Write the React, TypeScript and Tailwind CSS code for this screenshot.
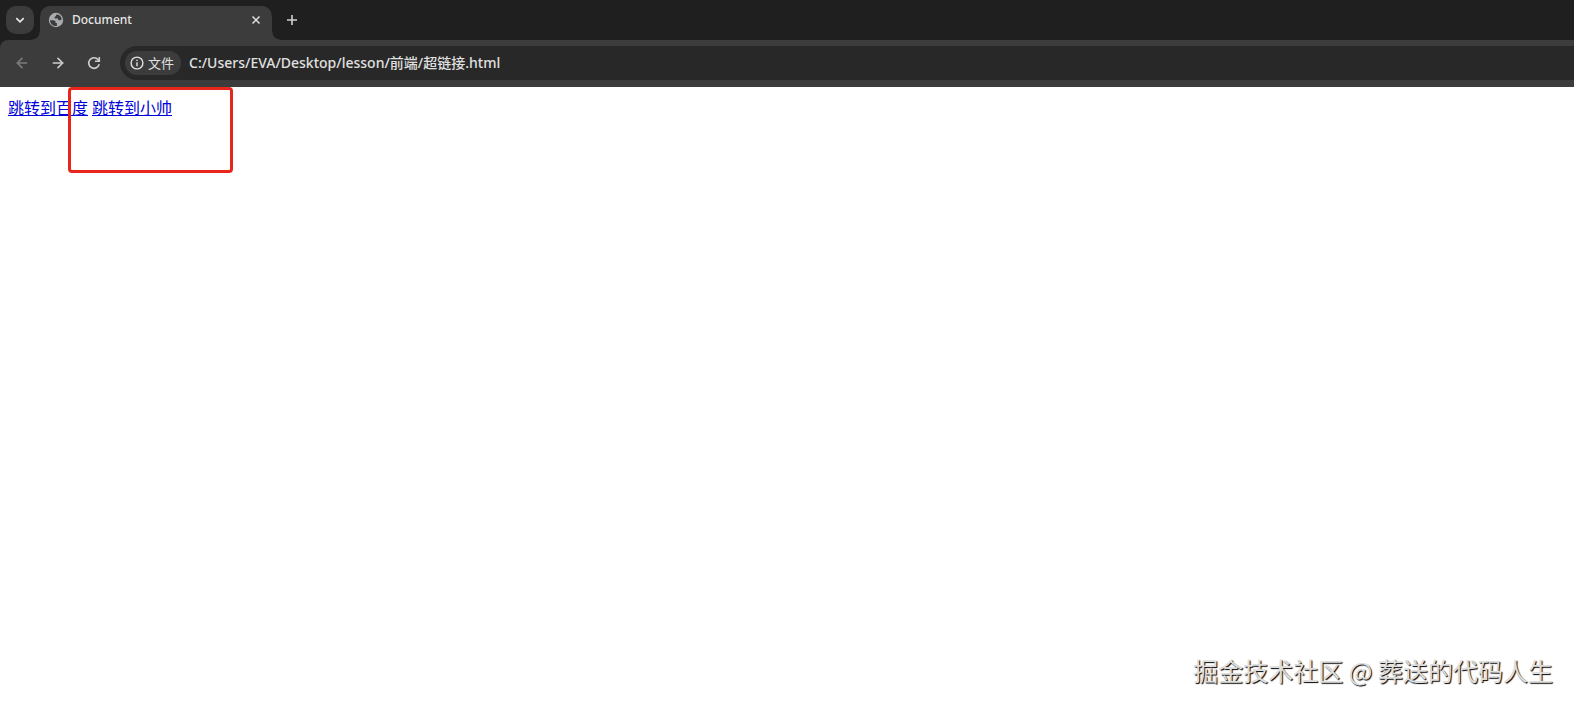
import { ArrowLeft, ArrowRight } from "lucide-react";

function GlobeIcon() {
  return (
    <svg viewBox="0 0 16 16" className="size-4 shrink-0" aria-hidden="true">
      <circle cx="8" cy="8" r="7.200" fill="#a9acaf" />
      <path
        d="M2 8.300h3.200c1.600 0 2.400.8 2.400 2.200v.6h1.300v2.900C5 14.500 2.200 12 2 8.300ZM8.400 2.400c2.900 0 4.900 1.900 5.300 4.600-.6 1.200-1.500 1.500-2.700 1.200-.9-.3-1-1-1.100-1.700H6.800c-.5-1.200-.1-1.900 1-2.200Z"
        fill="#3c3c3c"
      />
    </svg>
  );
}

function ReloadIcon() {
  return (
    <svg viewBox="0 0 16 16" className="size-4" fill="none" stroke="currentColor" strokeWidth="1.6" aria-hidden="true">
      <path d="M13.200 9.200A5.300 5.300 0 1 1 12.200 4.800L13.300 6" />
      <path d="M13.300 2v4.300H9" />
    </svg>
  );
}

function InfoIcon() {
  return (
    <svg viewBox="0 0 14 14" className="size-[14px]" fill="none" stroke="currentColor" strokeWidth="1.4" aria-hidden="true">
      <circle cx="7" cy="7" r="5.900" />
      <path d="M7 6.300v3.900M7 3.700v1.400" />
    </svg>
  );
}

function TabStrip() {
  return (
    <div className="flex h-10 items-end bg-[#1f1f1f] pl-[6px]">
      <button aria-label="Search tabs" className="mb-[6px] flex size-7 items-center justify-center rounded-[10px] bg-[#3c3c3c] text-[#e6e6e6]">
        <svg viewBox="0 0 10 10" className="size-[10px]" fill="none" stroke="currentColor" strokeWidth="1.700" aria-hidden="true">
          <path d="m1.300 3.200 3.700 3.600 3.700-3.600" />
        </svg>
      </button>

      <div className="relative ml-[6px] flex h-[34px] w-[232px] items-center rounded-t-[10px] bg-[#3c3c3c] pb-[6px] pl-2 pr-2">
        {/* flared feet that join the tab to the toolbar */}
        <span className="absolute -left-2 bottom-0 size-2 bg-[radial-gradient(circle_at_0_0,transparent_7px,#3c3c3c_8px)]" />
        <span className="absolute -right-2 bottom-0 size-2 bg-[radial-gradient(circle_at_100%_0,transparent_7px,#3c3c3c_8px)]" />
        <GlobeIcon />
        <span className="ml-2 flex-1 truncate text-[12px] font-medium leading-4 text-[#e6e6e6]">Document</span>
        <button aria-label="Close tab" className="flex size-4 items-center justify-center text-[#e0e0e0]">
          <svg viewBox="0 0 10 10" className="size-[10px]" fill="none" stroke="currentColor" strokeWidth="1.500" aria-hidden="true">
            <path d="m1.500 1.500 7 7M8.500 1.500l-7 7" />
          </svg>
        </button>
      </div>

      <button aria-label="New tab" className="mb-[6px] ml-[6px] flex size-7 items-center justify-center text-[#d0d0d0]">
        <svg viewBox="0 0 12 12" className="size-3" fill="none" stroke="currentColor" strokeWidth="1.600" aria-hidden="true">
          <path d="M6 1v10M1 6h10" />
        </svg>
      </button>
    </div>
  );
}

function Toolbar() {
  return (
    <div className="bg-[#1f1f1f]">
      <div className="flex items-center rounded-tl-lg bg-[#3c3c3c] pb-[7px] pl-2 pt-[6px]">
        <div className="flex gap-2">
          <button aria-label="Back" disabled className="flex size-7 items-center justify-center text-[#7d7d7d]">
            <ArrowLeft size={16} strokeWidth={2.400} />
          </button>
          <button aria-label="Forward" className="flex size-7 items-center justify-center text-[#cdcdcd]">
            <ArrowRight size={16} strokeWidth={2.400} />
          </button>
          <button aria-label="Reload" className="flex size-7 items-center justify-center text-[#cdcdcd]">
            <ReloadIcon />
          </button>
        </div>

        <div className="ml-3 flex h-[34px] flex-1 items-center rounded-l-full bg-[#282828] pl-[5px]">
          <button className="flex h-6 items-center gap-1 rounded-full bg-[#3c3c3c] pl-[5px] pr-[7px] text-[13px] leading-4 text-[#e0e0e0]">
            <InfoIcon />
            文件
          </button>
          <input
            type="text"
            aria-label="Address"
            defaultValue="C:/Users/EVA/Desktop/lesson/前端/超链接.html"
            className="ml-2 min-w-0 flex-1 bg-transparent text-[14px] font-medium leading-5 text-[#e0e0e0] outline-none"
          />
        </div>
      </div>
    </div>
  );
}

export default function App() {
  return (
    <div className="relative flex min-h-screen flex-col bg-white font-['Noto_Sans','Noto_Sans_CJK_SC',sans-serif]">
      <TabStrip />
      <Toolbar />

      <main className="relative flex-1">
        <p className="flex gap-1 px-2 pt-2 font-['Noto_Sans_CJK_SC',sans-serif] text-base text-[#0000d8]">
          <a href="#baidu" className="underline">跳转到百度</a>
          <a href="#xiaoshuai" className="underline">跳转到小帅</a>
        </p>
        <div className="absolute left-[68px] top-0 h-[86px] w-[165px] rounded-[4px] border-3 border-[#e8261c]" />
      </main>

      <div className="absolute bottom-[19px] right-[21px] font-['Noto_Sans_CJK_SC',sans-serif] text-[25px] leading-9 text-[#dedede] [text-shadow:1px_1px_1px_#000]">
        掘金技术社区 @ 葬送的代码人生
      </div>
    </div>
  );
}
